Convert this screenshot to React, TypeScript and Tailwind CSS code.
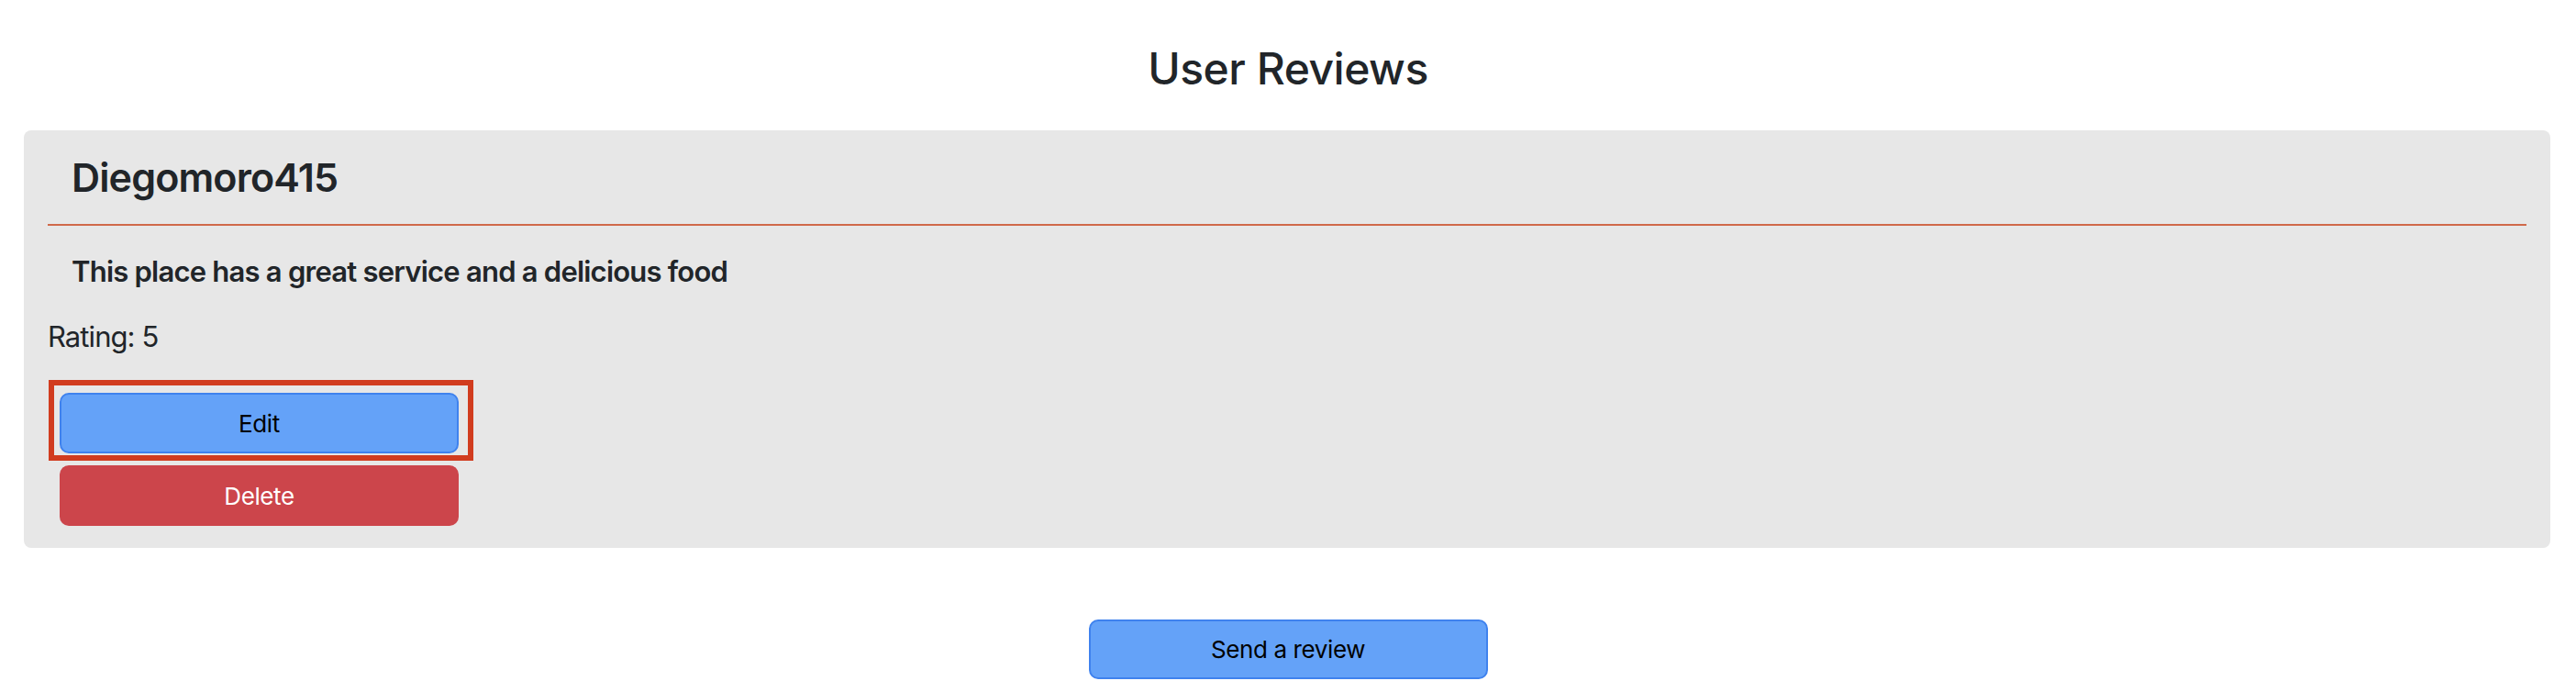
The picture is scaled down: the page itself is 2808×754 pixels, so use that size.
export default function App() {
  return (
    <div className="min-h-[754px] bg-white text-[#212529] font-['Inter','Liberation_Sans',sans-serif]">
      <h1 className="pt-[46px] text-center text-[48px] leading-[58px] font-medium tracking-[-0.01em]">User Reviews</h1>

      {/* Review card */}
      <div className="ml-[26px] mr-[28px] mt-[38px] rounded-lg bg-[#e7e7e7] px-[26px] pt-[25px] pb-[24px]">
        <h2 className="pl-[26px] text-[43px] leading-[53px] font-semibold tracking-[-0.02em]">Diegomoro415</h2>
        <hr className="mt-[24px] border-0 border-t-2 border-[#d0694a]" />
        <p className="mt-[26px] pl-[26px] text-[31px] leading-[48px] font-semibold tracking-[-0.025em]">
          This place has a great service and a delicious food
        </p>
        <p className="mt-[23px] text-[31px] leading-[48px] tracking-[-0.03em]">Rating: 5</p>

        <div className="mt-[37px] pl-[13px] flex flex-col gap-[13px]">
          <div className="relative w-[435px]">
            <button className="w-full h-[66px] rounded-[10px] border-2 border-[#3f82ee] bg-[#64a2f8] text-[26px] tracking-[-0.015em] text-black">
              Edit
            </button>
            {/* highlight outline */}
            <div className="pointer-events-none absolute -top-[14px] -bottom-[8px] -left-[12px] -right-[16px] border-[6px] border-[#d13c1f]" />
          </div>
          <button className="w-[435px] h-[66px] rounded-[10px] bg-[#cc454b] text-[26px] tracking-[-0.015em] text-white">
            Delete
          </button>
        </div>
      </div>

      <div className="mt-[78px] flex justify-center">
        <button className="w-[435px] h-[65px] rounded-[10px] border-2 border-[#3f82ee] bg-[#64a2f8] text-[26px] tracking-[-0.015em] text-black">
          Send a review
        </button>
      </div>
    </div>
  );
}
